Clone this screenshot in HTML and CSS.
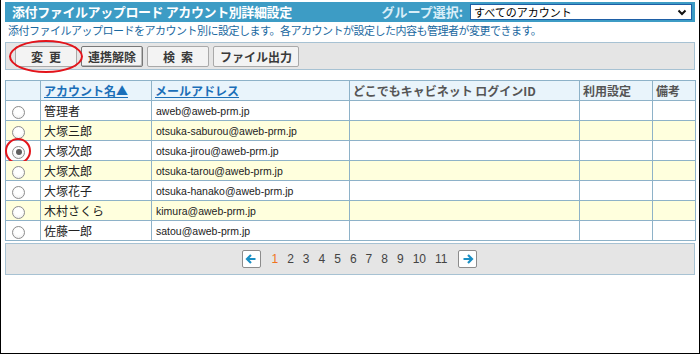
FILE: index.html
```html
<!DOCTYPE html>
<html lang="ja">
<head>
<meta charset="utf-8">
<link rel="stylesheet" href="styles.css">
</head>
<body>
<div class="frame">
  <div class="titlebar">
    <span class="title">添付ファイルアップロード アカウント別詳細設定</span>
    <div class="group">
      <span class="group-label">グループ選択:</span>
      <div class="select"><span>すべてのアカウント</span>
        <svg class="chev" width="10" height="7" viewBox="0 0 10 7"><path d="M1.5 1.5 L5 5 L8.5 1.5" fill="none" stroke="#111" stroke-width="2"/></svg>
      </div>
    </div>
  </div>
  <p class="desc">添付ファイルアップロードをアカウント別に設定します。各アカウントが設定した内容も管理者が変更できます。</p>
  <div class="toolbar">
    <button class="btn btn-spaced">変&ensp;更</button>
    <button class="btn btn-dark">連携解除</button>
    <button class="btn btn-spaced">検&ensp;索</button>
    <button class="btn btn-wide">ファイル出力</button>
    <span class="ring ring-btn"></span>
  </div>
  <table class="grid">
    <thead>
      <tr>
        <th class="c-radio"></th>
        <th class="c-name"><a class="sort">アカウント名▲</a></th>
        <th class="c-mail"><a class="sort">メールアドレス</a></th>
        <th class="c-id">どこでもキャビネット ログインID</th>
        <th class="c-use">利用設定</th>
        <th class="c-note">備考</th>
      </tr>
    </thead>
    <tbody>
      <tr><td class="c-radio"><span class="radio"></span></td><td>管理者</td><td class="mail">aweb@aweb-prm.jp</td><td></td><td></td><td></td></tr>
      <tr class="alt"><td class="c-radio"><span class="radio"></span></td><td>大塚三郎</td><td class="mail">otsuka-saburou@aweb-prm.jp</td><td></td><td></td><td></td></tr>
      <tr><td class="c-radio sel-cell"><span class="radio on"></span><span class="ring ring-radio"></span></td><td>大塚次郎</td><td class="mail">otsuka-jirou@aweb-prm.jp</td><td></td><td></td><td></td></tr>
      <tr class="alt"><td class="c-radio"><span class="radio"></span></td><td>大塚太郎</td><td class="mail">otsuka-tarou@aweb-prm.jp</td><td></td><td></td><td></td></tr>
      <tr><td class="c-radio"><span class="radio"></span></td><td>大塚花子</td><td class="mail">otsuka-hanako@aweb-prm.jp</td><td></td><td></td><td></td></tr>
      <tr class="alt"><td class="c-radio"><span class="radio"></span></td><td>木村さくら</td><td class="mail">kimura@aweb-prm.jp</td><td></td><td></td><td></td></tr>
      <tr><td class="c-radio"><span class="radio"></span></td><td>佐藤一郎</td><td class="mail">satou@aweb-prm.jp</td><td></td><td></td><td></td></tr>
    </tbody>
  </table>
  <div class="pager">
    <span class="arrow"><svg width="12" height="12" viewBox="0 0 12 12"><path d="M10.5 6 H2.5 M6 2 L2 6 L6 10" fill="none" stroke="#1a8fc4" stroke-width="2.2"/></svg></span>
    <span class="num cur">1</span>
    <span class="num">2</span>
    <span class="num">3</span>
    <span class="num">4</span>
    <span class="num">5</span>
    <span class="num">6</span>
    <span class="num">7</span>
    <span class="num">8</span>
    <span class="num">9</span>
    <span class="num">10</span>
    <span class="num">11</span>
    <span class="arrow"><svg width="12" height="12" viewBox="0 0 12 12"><path d="M1.5 6 H9.5 M6 2 L10 6 L6 10" fill="none" stroke="#1a8fc4" stroke-width="2.2"/></svg></span>
  </div>
</div>
</body>
</html>
```
FILE: styles.css
```css
* { box-sizing: border-box; }
html, body { margin: 0; padding: 0; background: #fff; }
body { font-family: "Noto Sans CJK JP", "Noto Sans", sans-serif; font-size: 12px; color: #222; }

.frame {
  width: 700px;
  height: 354px;
  border: 1px solid #000;
  border-top: 0;
  padding: 2px 4px 0 4px;
}

.titlebar {
  height: 20px;
  background: #3d9cc5;
  display: flex;
  align-items: center;
  justify-content: space-between;
  padding: 0 3px 0 7px;
}
.title {
  color: #fff;
  font-weight: bold;
  font-size: 13px;
  letter-spacing: -0.4px;
  line-height: 20px;
}
.group { display: flex; align-items: center; gap: 7px; }
.group-label {
  color: #d9eef8;
  font-weight: bold;
  font-size: 13px;
  line-height: 20px;
}
.select {
  width: 222px;
  height: 16px;
  background: #fff;
  border: 1px solid #1e5fa6;
  display: flex;
  align-items: center;
  justify-content: space-between;
  padding: 0 4px 0 3px;
  font-size: 11px;
  color: #000;
  line-height: 14px;
}
.chev { display: block; }

.desc {
  margin: 0;
  height: 20px;
  line-height: 16px;
  padding-left: 3px;
  font-size: 11px;
  color: #1a68a0;
  letter-spacing: -0.5px;
}

.toolbar {
  position: relative;
  height: 28px;
  background: #e5e5e5;
  border: 1px solid #a7c2d3;
  display: flex;
  align-items: center;
  gap: 4px;
  padding-left: 9px;
}
.btn {
  height: 21px;
  width: 62px;
  padding: 0;
  background: #f3f3f3;
  border: 1px solid #a9a9a9;
  border-radius: 2px;
  font-family: "Noto Sans CJK JP", sans-serif;
  font-weight: bold;
  font-size: 12px;
  color: #3a3a3a;
  line-height: 19px;
}
.btn-dark { border-color: #777; box-shadow: inset -1px -1px 0 #bbb; }
.btn-wide { width: 86px; }

.ring {
  position: absolute;
  border: 2px solid #e3141b;
  border-radius: 50%;
  pointer-events: none;
}
.ring-btn { left: 3px; top: -3px; width: 74px; height: 33px; }

.grid {
  margin-top: 10px;
  width: 690px;
  border-collapse: collapse;
  table-layout: fixed;
  border: 1px solid #8eb2c8;
}
.grid th, .grid td {
  border: 1px solid #8eb2c8;
  padding: 0 0 0 3px;
  text-align: left;
  vertical-align: middle;
  font-size: 12px;
  white-space: nowrap;
  overflow: visible;
}
.grid th {
  height: 20px;
  background: #e9f4fb;
  font-weight: bold;
  color: #555;
  line-height: 17px;
}
.grid td { height: 20px; line-height: 18px; background: #fff; color: #222; }
.grid tr.alt td { background: #ffffdd; }
.c-radio { width: 35px; }
.c-name { width: 111px; }
.c-mail { width: 198px; }
.c-id { width: 230px; }
.c-use { width: 73px; }
.c-note { width: 43px; }
.grid td.c-radio { padding: 0 0 0 6px; text-align: left; position: relative; }
.sort { color: #1b6fb8; text-decoration: underline; }
.grid td.mail {
  font-family: "Liberation Sans", sans-serif;
  font-size: 10.5px;
  padding-left: 4px;
  color: #222;
}

.radio {
  display: inline-block;
  vertical-align: middle;
  width: 13px;
  height: 13px;
  border: 1px solid #8c8c8c;
  border-radius: 50%;
  background: radial-gradient(circle at 50% 40%, #fff 40%, #e8e8e8 100%);
  position: relative;
}
.radio.on::after {
  content: "";
  position: absolute;
  left: 2.5px; top: 2.5px;
  width: 6px; height: 6px;
  border-radius: 50%;
  background: #5f5f5f;
}
.ring-radio { left: -1px; top: -3px; width: 26px; height: 26px; }

.pager {
  margin-top: 2px;
  height: 32px;
  background: #e5e5e5;
  border: 1px solid #a7c2d3;
  display: flex;
  align-items: center;
  justify-content: center;
  padding-left: 19px;
  font-family: "Liberation Sans", sans-serif;
  font-size: 12px;
  color: #444;
}
.arrow {
  width: 19px;
  height: 18px;
  background: #fff;
  border: 1px solid #8c8c8c;
  border-radius: 2px;
  display: flex;
  align-items: center;
  justify-content: center;
  margin: 0 6px;
}
.num { padding: 0 4.5px; }
.num.cur { color: #f0731e; }
```
